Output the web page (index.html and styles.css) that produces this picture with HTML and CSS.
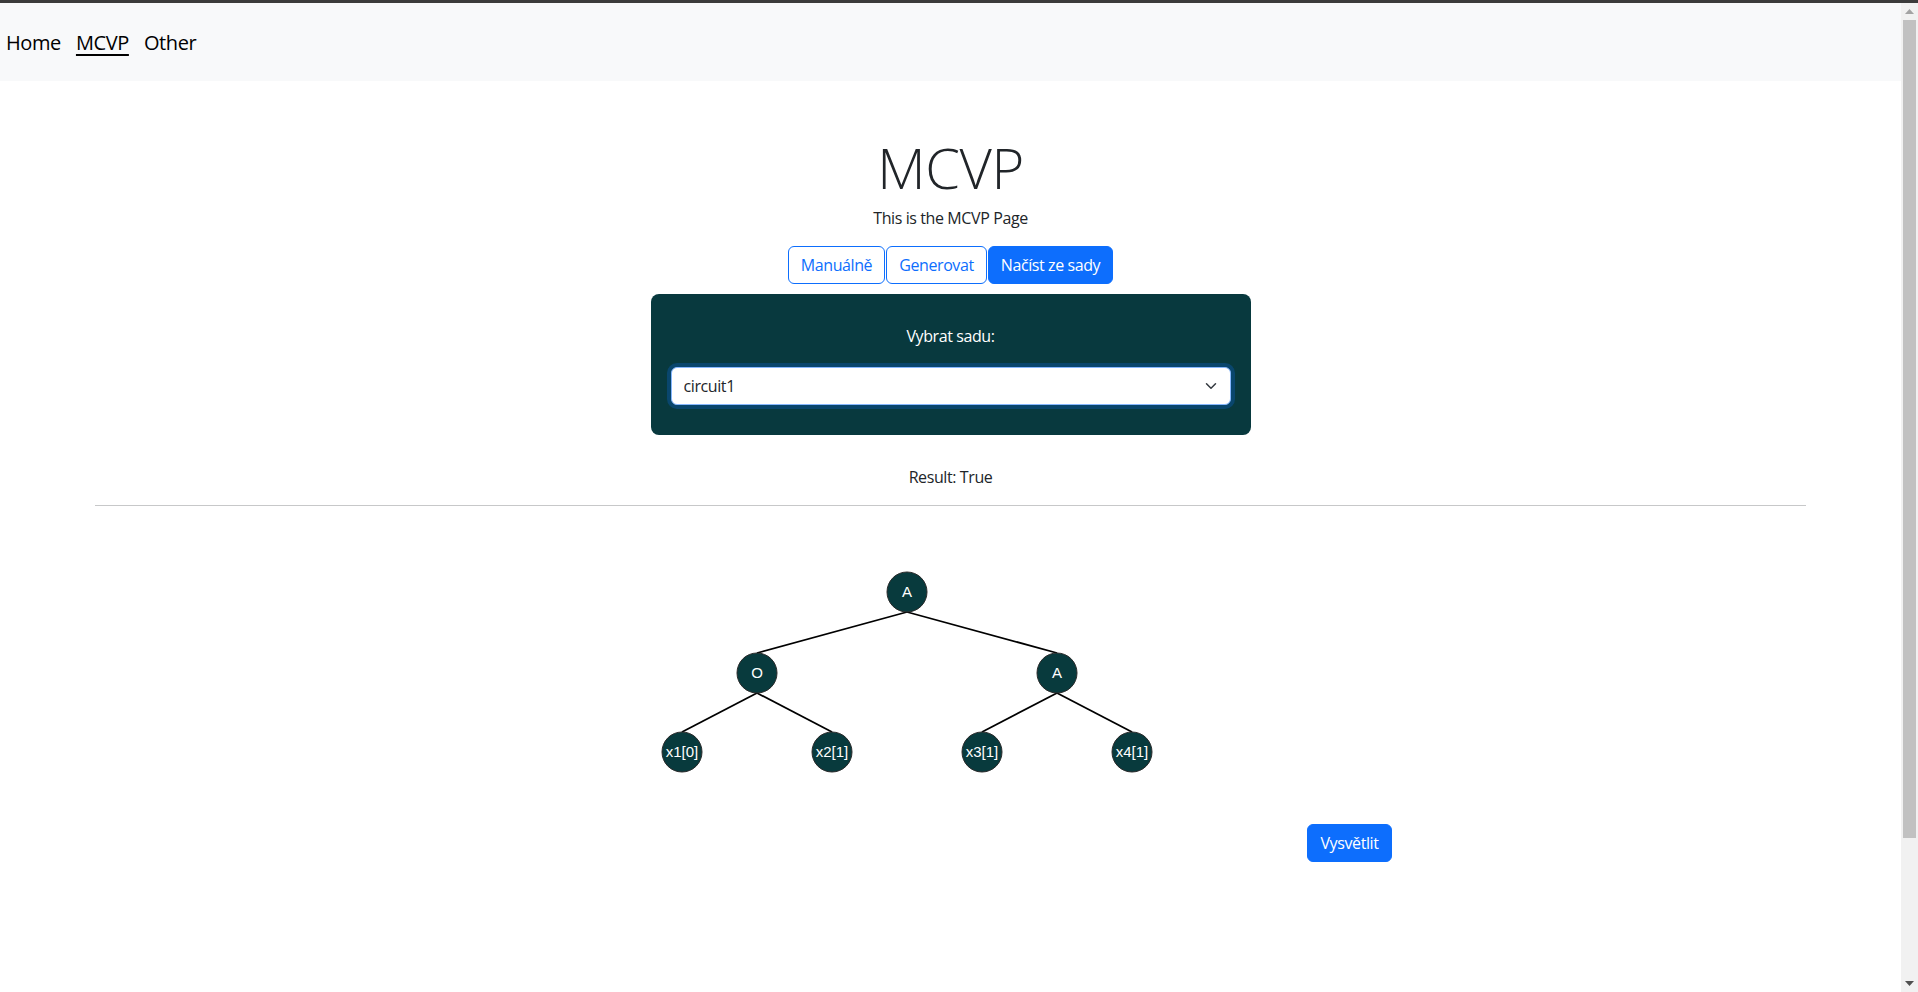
FILE: index.html
```html
<!DOCTYPE html>
<html lang="cs">
<head>
<meta charset="utf-8">
<title>MCVP</title>
<link rel="stylesheet" href="styles.css">
</head>
<body>
<div class="page">
  <nav class="topnav">
    <a class="nav-link" href="#">Home</a>
    <a class="nav-link active" href="#">MCVP</a>
    <a class="nav-link" href="#">Other</a>
  </nav>
  <main class="main">
    <h1 class="title">MCVP</h1>
    <p class="lead-text">This is the MCVP Page</p>
    <div class="mode-buttons">
      <button class="btn btn-outline">Manuálně</button>
      <button class="btn btn-outline">Generovat</button>
      <button class="btn btn-primary">Načíst ze sady</button>
    </div>
    <section class="panel">
      <label class="panel-label" for="set">Vybrat sadu:</label>
      <div class="select-wrap">
        <select id="set" class="form-select">
          <option>circuit1</option>
        </select>
        <svg class="chevron" width="16" height="12" viewBox="0 0 16 16" aria-hidden="true">
          <path d="m2 5 6 6 6-6" fill="none" stroke="#343a40" stroke-width="2" stroke-linecap="round" stroke-linejoin="round"/>
        </svg>
      </div>
    </section>
    <p class="result">Result: True</p>
    <hr class="divider">
    <div class="viz-row">
      <svg class="tree" width="798" height="322" viewBox="0 0 798 322">
        <g class="edges" stroke="#000" stroke-width="1.8" fill="none">
          <line x1="398" y1="72" x2="248" y2="113"/>
          <line x1="398" y1="72" x2="548" y2="113"/>
          <line x1="248" y1="153" x2="173" y2="192"/>
          <line x1="248" y1="153" x2="323" y2="192"/>
          <line x1="548" y1="153" x2="473" y2="192"/>
          <line x1="548" y1="153" x2="623" y2="192"/>
        </g>
        <g class="node"><circle cx="398" cy="52" r="20"/><text x="398" y="57">A</text></g>
        <g class="node"><circle cx="248" cy="133" r="20"/><text x="248" y="138">O</text></g>
        <g class="node"><circle cx="548" cy="133" r="20"/><text x="548" y="138">A</text></g>
        <g class="node"><circle cx="173" cy="212" r="20"/><text x="173" y="217">x1[0]</text></g>
        <g class="node"><circle cx="323" cy="212" r="20"/><text x="323" y="217">x2[1]</text></g>
        <g class="node"><circle cx="473" cy="212" r="20"/><text x="473" y="217">x3[1]</text></g>
        <g class="node"><circle cx="623" cy="212" r="20"/><text x="623" y="217">x4[1]</text></g>
      </svg>
      <button class="btn btn-primary explain">Vysvětlit</button>
    </div>
  </main>
</div>
<div class="scrollbar" aria-hidden="true">
  <div class="sb-button">
    <svg width="9" height="5" viewBox="0 0 9 5"><path d="M0 5 L4.5 0 L9 5 Z" fill="#a3a3a3"/></svg>
  </div>
  <div class="sb-track">
    <div class="sb-thumb"></div>
  </div>
  <div class="sb-button">
    <svg width="9" height="5" viewBox="0 0 9 5"><path d="M0 0 L4.5 5 L9 0 Z" fill="#505050"/></svg>
  </div>
</div>
</body>
</html>
```
FILE: styles.css
```css
html, body {
  margin: 0;
  padding: 0;
  height: 100%;
  overflow: hidden;
}

body {
  display: flex;
  border-top: 3px solid #3b3b3b;
  box-sizing: border-box;
  font-family: "Open Sans", "Noto Sans", sans-serif;
  font-size: 16px;
  line-height: 1.5;
  letter-spacing: -0.025em;
  color: #212529;
  background: #fff;
}

.page {
  flex: 1;
  min-width: 0;
  overflow: hidden;
}

/* emulated classic scrollbar */
.scrollbar {
  width: 17px;
  flex: none;
  display: flex;
  flex-direction: column;
  background: #f1f1f1;
}
.sb-button {
  height: 17px;
  flex: none;
  display: flex;
  align-items: center;
  justify-content: center;
}
.sb-track {
  flex: 1;
  display: flex;
  flex-direction: column;
  align-items: center;
}
.sb-thumb {
  width: 13px;
  height: 818px;
  background: #c1c1c1;
}

.topnav {
  height: 78px;
  box-sizing: border-box;
  padding: 2px 0 0 6px;
  background: #f8f9fa;
  display: flex;
  align-items: center;
  gap: 15px;
}

.nav-link {
  font-size: 20px;
  line-height: 30px;
  color: #000;
  text-decoration: none;
}
.nav-link.active {
  text-decoration: underline;
  text-underline-offset: 4px;
}

.main {
  text-align: center;
}

.title {
  margin: 53px 0 5px;
  font-size: 56px;
  font-weight: 300;
  line-height: 1.2;
  color: #212529;
}

.lead-text {
  margin: 0 0 16px;
}

.mode-buttons {
  display: flex;
  justify-content: center;
  gap: 1px;
}

.btn {
  font-family: inherit;
  font-size: 16px;
  line-height: 24px;
  letter-spacing: inherit;
  padding: 6px 12px;
  border: 1px solid #0d6efd;
  border-radius: 6px;
  cursor: pointer;
}
.btn-outline {
  background: #fff;
  color: #0d6efd;
}
.btn-primary {
  background: #0d6efd;
  color: #fff;
}

.panel {
  width: 600px;
  box-sizing: border-box;
  margin: 10px auto 0;
  padding: 30px 20px 30px;
  background: #08393e;
  border-radius: 8px;
  text-align: center;
}

.panel-label {
  display: block;
  color: #fff;
  margin-bottom: 19px;
}

.select-wrap {
  position: relative;
}

.form-select {
  display: block;
  width: 100%;
  box-sizing: border-box;
  appearance: none;
  -webkit-appearance: none;
  font-family: inherit;
  font-size: 16px;
  line-height: 24px;
  letter-spacing: inherit;
  padding: 6px 36px 6px 12px;
  color: #212529;
  background: #fff;
  border: 1px solid #86b7fe;
  border-radius: 6px;
  box-shadow: 0 0 0 4px rgba(13, 110, 253, 0.25);
  outline: none;
}

.chevron {
  position: absolute;
  right: 12px;
  top: 13px;
  pointer-events: none;
}

.result {
  margin: 30px 0 0;
}

.divider {
  width: 90%;
  margin: 16px auto 0;
  border: 0;
  border-top: 1px solid #212529;
  opacity: 0.25;
}

.viz-row {
  display: flex;
  justify-content: center;
  align-items: flex-end;
  margin-top: 34px;
}

.tree {
  display: block;
}

.node circle {
  fill: #083a3d;
  stroke: #2a2a2a;
  stroke-width: 1;
}

.node text {
  fill: #fff;
  font-family: "Liberation Sans", Arial, sans-serif;
  font-size: 15px;
  letter-spacing: 0;
  text-anchor: middle;
}

.explain {
  flex: none;
}
```
